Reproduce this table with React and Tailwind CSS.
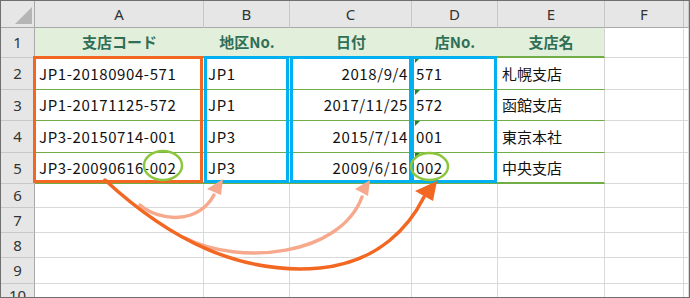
import React from "react";

const cols = ["A", "B", "C", "D", "E", "F", ""];

const heads = ["支店コード", "地区No.", "日付", "店No.", "支店名"];

const rows = [
  ["JP1-20180904-571", "JP1", "2018/9/4", "571", "札幌支店"],
  ["JP1-20171125-572", "JP1", "2017/11/25", "572", "函館支店"],
  ["JP3-20150714-001", "JP3", "2015/7/14", "001", "東京本社"],
  ["JP3-20090616-002", "JP3", "2009/6/16", "002", "中央支店"],
];

const font = { fontFamily: '"Noto Sans CJK JP", "Noto Sans", sans-serif' };

const RowHead = ({ n }) => (
  <div className="flex items-center justify-center bg-[#e6e6e6] border-r border-b border-r-[#a9a9a9] border-b-[#c9c9c9] text-[15px] text-[#333] font-['Noto_Sans',sans-serif]">
    {n}
  </div>
);

const Blank = () => <div className="border-r border-b border-[#d9d9d9]" />;

const App = () => {
  return (
    <div className="relative w-[690px] h-[298px] overflow-hidden bg-white border border-[#6f6f6f]" style={font}>
      <div className="grid h-full grid-cols-[34px_169px_86px_122px_86px_107px_79px_1fr] grid-rows-[27px_30px_32px_31px_32px_31px_24px_25px_25px_26px_1fr]">
        {/* column letters */}
        <div className="relative bg-[#e6e6e6] border-r border-b border-[#a9a9a9]">
          <svg className="absolute left-0 top-0" width="34" height="27">
            <polygon points="14,23 31,23 31,6" fill="#b5b5b5" />
          </svg>
        </div>
        {cols.map((c, i) => (
          <div
            key={i}
            className="flex items-center justify-center bg-[#e6e6e6] border-r border-b border-r-[#c6c6c6] border-b-[#a9a9a9] text-[15px] text-[#333] font-['Noto_Sans',sans-serif]"
          >
            {c}
          </div>
        ))}

        {/* table header row */}
        <RowHead n={1} />
        {heads.map((h, i) => (
          <div
            key={h}
            className={`flex items-center justify-center bg-[#e2efda] border-b-2 border-b-[#70ad47] text-[15px] font-bold text-[#2f6f57] ${i === 4 ? "border-r border-r-[#d4d4d4]" : ""}`}
          >
            {h}
          </div>
        ))}
        <Blank />
        <Blank />

        {/* data rows */}
        {rows.map((r, ri) => (
          <React.Fragment key={ri}>
            <RowHead n={ri + 2} />
            {r.map((v, ci) => (
              <div
                key={ci}
                className={`relative flex items-center text-[15px] text-[#111] pt-[1px] ${
                  ri === 3 ? "border-b-2" : "border-b"
                } border-b-[#70ad47] ${ci === 2 ? "justify-end pr-[4px]" : "pl-[4px]"} ${
                  ci === 4 ? "border-r border-r-[#d4d4d4]" : "tracking-[0.6px]"
                }`}
              >
                {ci === 3 && (
                  <span className="absolute left-[3px] top-0 w-0 h-0 border-t-[5px] border-r-[5px] border-t-[#23822f] border-r-transparent" />
                )}
                {v}
              </div>
            ))}
            <Blank />
            <Blank />
          </React.Fragment>
        ))}

        {/* empty rows */}
        {[6, 7, 8, 9, 10].map((n) => (
          <React.Fragment key={n}>
            <RowHead n={n} />
            {cols.map((c, i) => (
              <Blank key={i} />
            ))}
          </React.Fragment>
        ))}
      </div>

      {/* annotations */}
      <svg className="absolute -left-px -top-px pointer-events-none" width="690" height="298">
        <rect x="34.5" y="57.5" width="167" height="124" fill="none" stroke="#f26722" strokeWidth="3" />
        <rect x="205.5" y="57.5" width="82" height="124" fill="none" stroke="#00b0f0" strokeWidth="3" />
        <rect x="291.5" y="57.5" width="119" height="124" fill="none" stroke="#00b0f0" strokeWidth="3" />
        <rect x="412.5" y="57.5" width="83" height="124" fill="none" stroke="#00b0f0" strokeWidth="3" />

        <ellipse cx="163" cy="165.5" rx="19" ry="14.5" fill="none" stroke="#8cc63f" strokeWidth="2.5" />
        <ellipse cx="429.5" cy="166.5" rx="18.5" ry="13.5" fill="none" stroke="#8cc63f" strokeWidth="2.5" />

        {/* light arrows */}
        <path d="M140,205 C160,222 198,224 214,195" fill="none" stroke="#f6a98c" strokeWidth="3.5" strokeLinecap="round" />
        <polygon points="223,179 207,189 221,195" fill="#f6a98c" />
        <path d="M185,238 C240,266 340,256 362,197" fill="none" stroke="#f6a98c" strokeWidth="3.5" strokeLinecap="round" />
        <polygon points="370,180 355,189 368,196" fill="#f6a98c" />

        {/* dark arrow */}
        <path d="M105,180 C170,240 240,275 320,268 C380,262 410,225 424,197" fill="none" stroke="#f26722" strokeWidth="3.5" strokeLinecap="round" />
        <polygon points="437,181 415,191 433,201" fill="#f26722" />
      </svg>
    </div>
  );
};

export default App;
